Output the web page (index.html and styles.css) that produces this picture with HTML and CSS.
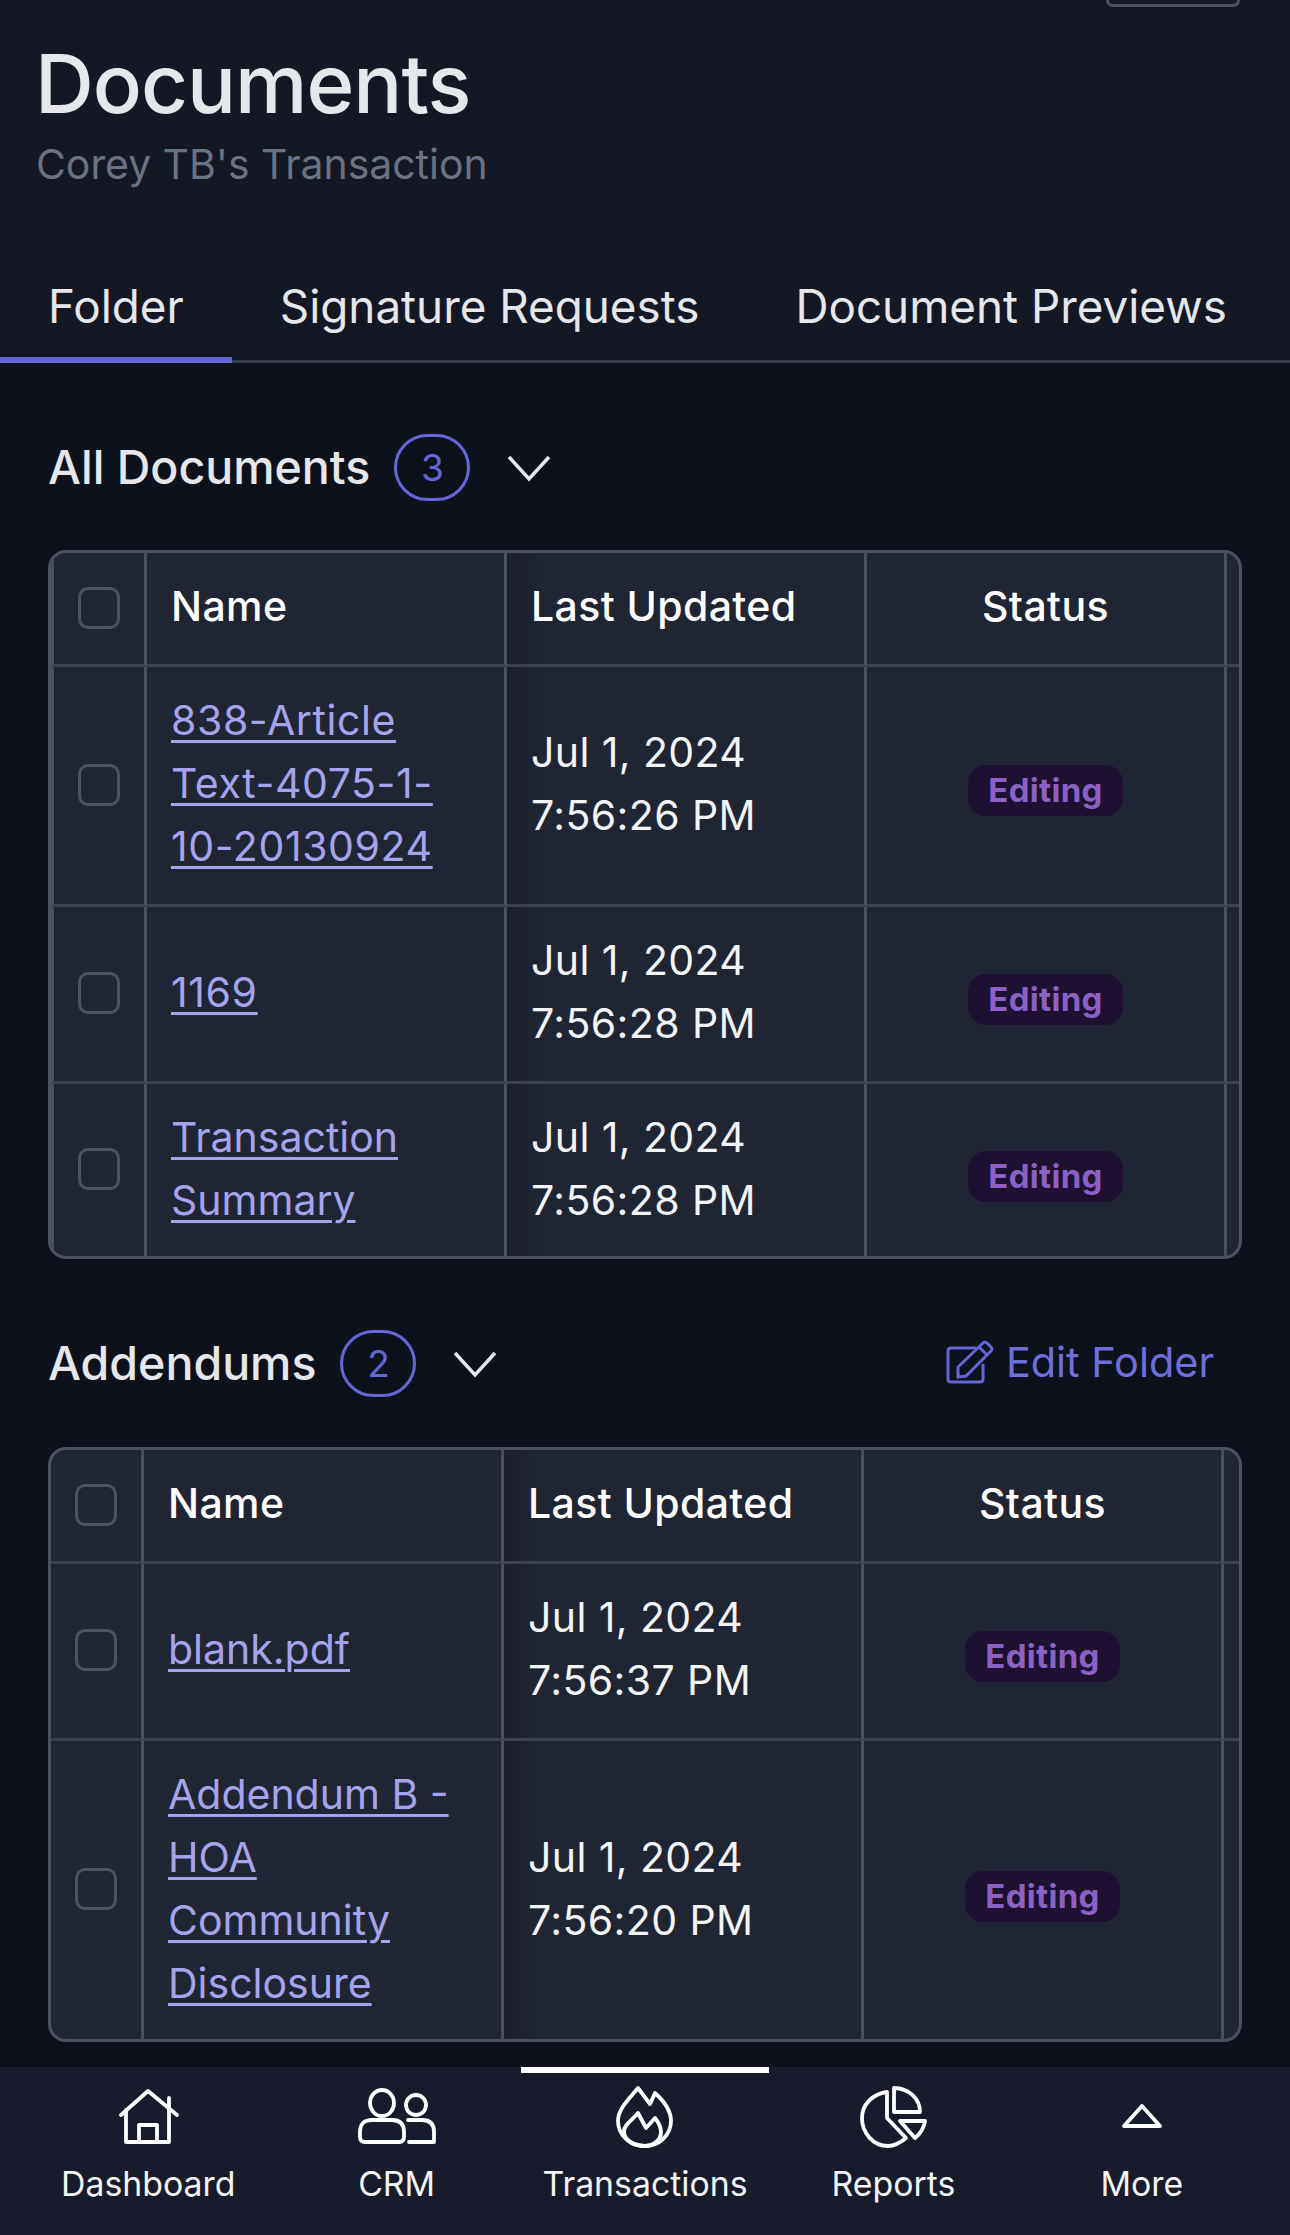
FILE: index.html
```html
<!DOCTYPE html>
<html lang="en">

<head>
    <meta charset="UTF-8">
    <meta name="viewport" content="width=device-width, initial-scale=1.0">
    <title>Documents</title>

    <link rel="stylesheet" href="styles.css">
</head>

<body>

    <header class="page-header">
        <div class="top-button"></div>
        <h1>Documents</h1>
        <p class="subtitle">Corey TB's Transaction</p>

        <nav class="tabs">
            <a class="tab tab-active">Folder</a>
            <a class="tab">Signature Requests</a>
            <a class="tab">Document Previews</a>
        </nav>
    </header>

    <main class="content">
        <section class="folder">
            <div class="folder-head">
                <h2>All Documents</h2>
                <span class="count">3</span>
                <svg class="chevron" viewBox="0 0 44 28"><path d="M2 3 L22 25 L42 3"/></svg>
            </div>

            <div class="table-wrap">
                <table class="doc-table">
                    <thead>
                        <tr>
                            <th class="col-check"><span class="checkbox"></span></th>
                            <th class="col-name">Name</th>
                            <th class="col-date">Last Updated</th>
                            <th class="col-status">Status</th>
                            <th class="col-more"></th>
                        </tr>
                    </thead>
                    <tbody>
                        <tr>
                            <td class="col-check"><span class="checkbox"></span></td>
                            <td class="col-name"><a class="link-digits" href="#">838-Article Text-4075-1-10-20130924</a></td>
                            <td class="col-date">Jul 1, 2024<br>7:56:26 PM</td>
                            <td class="col-status"><span class="badge">Editing</span></td>
                            <td class="col-more"></td>
                        </tr>
                        <tr>
                            <td class="col-check"><span class="checkbox"></span></td>
                            <td class="col-name"><a class="link-digits" href="#">1169</a></td>
                            <td class="col-date">Jul 1, 2024<br>7:56:28 PM</td>
                            <td class="col-status"><span class="badge">Editing</span></td>
                            <td class="col-more"></td>
                        </tr>
                        <tr>
                            <td class="col-check"><span class="checkbox"></span></td>
                            <td class="col-name"><a href="#">Transaction Summary</a></td>
                            <td class="col-date">Jul 1, 2024<br>7:56:28 PM</td>
                            <td class="col-status"><span class="badge">Editing</span></td>
                            <td class="col-more"></td>
                        </tr>
                    </tbody>
                </table>
            </div>
        </section>

        <section class="folder">
            <div class="folder-head">
                <h2>Addendums</h2>
                <span class="count">2</span>
                <svg class="chevron" viewBox="0 0 44 28"><path d="M2 3 L22 25 L42 3"/></svg>
                <a class="edit-folder">
                    <svg viewBox="0 0 48 44">
                        <path d="M30 8 H5 Q2 8 2 11 V39 Q2 42 5 42 H34 Q37 42 37 39 V24"/>
                        <path d="M12 27 L37 3 Q39 1 41 3 L45 7 Q47 9 45 11 L20 36 L12 37 Z"/>
                        <path d="M33 7 L41 15"/>
                    </svg>
                    Edit Folder
                </a>
            </div>

            <div class="table-wrap">
                <table class="doc-table doc-table-scrolled">
                    <thead>
                        <tr>
                            <th class="col-check"><span class="checkbox"></span></th>
                            <th class="col-name">Name</th>
                            <th class="col-date">Last Updated</th>
                            <th class="col-status">Status</th>
                            <th class="col-more"></th>
                        </tr>
                    </thead>
                    <tbody>
                        <tr>
                            <td class="col-check"><span class="checkbox"></span></td>
                            <td class="col-name"><a href="#">blank.pdf</a></td>
                            <td class="col-date">Jul 1, 2024<br>7:56:37 PM</td>
                            <td class="col-status"><span class="badge">Editing</span></td>
                            <td class="col-more"></td>
                        </tr>
                        <tr>
                            <td class="col-check"><span class="checkbox"></span></td>
                            <td class="col-name"><a href="#">Addendum B - HOA Community Disclosure</a></td>
                            <td class="col-date">Jul 1, 2024<br>7:56:20 PM</td>
                            <td class="col-status"><span class="badge">Editing</span></td>
                            <td class="col-more"></td>
                        </tr>
                    </tbody>
                </table>
            </div>
        </section>
    </main>

    <nav class="bottom-nav">
        <a class="nav-item">
            <svg viewBox="0 0 80 64">
                <path d="M13 30 L40 6 L69 30"/>
                <path d="M18 25 V57 H61 V13"/>
                <path d="M31 57 V40 H49 V57"/>
            </svg>
            Dashboard
        </a>
        <a class="nav-item">
            <svg viewBox="0 0 80 64">
                <ellipse cx="25" cy="18" rx="12" ry="13"/>
                <circle cx="59" cy="20" r="10"/>
                <path d="M8 57 H42 Q47 57 47 52 V47 Q47 35 35 35 H15 Q3 35 3 47 V52 Q3 57 8 57 Z"/>
                <path d="M51 35 H65 Q77 35 77 47 V57 H52"/>
            </svg>
            CRM
        </a>
        <a class="nav-item nav-active">
            <svg viewBox="0 0 80 64">
                <path d="M33 3 L45 19 L50 8 C60 17 66 26 66 36 C66 50 54 61 40 61 C25 61 13 50 13 36 C13 24 24 14 33 3 Z"/>
                <path d="M33 28 L41 43 L50 33 C54 38 56 43 56 47 C56 55 48 61 40 61 C28 61 19 55 19 46 C19 40 26 36 33 28 Z"/>
            </svg>
            Transactions
        </a>
        <a class="nav-item">
            <svg viewBox="0 0 80 64">
                <path d="M34 7 V33 L53 53 C47 58 42 61 35 61 C20 61 9 48 9 33 C9 20 19 9 34 7 Z"/>
                <path d="M41 3 C56 3 67 14 67 27 H41 Z"/>
                <path d="M47 36 H72 C71 43 67 49 62 53 Z"/>
            </svg>
            Reports
        </a>
        <a class="nav-item">
            <svg viewBox="0 0 80 64">
                <path d="M40 21 L22 41 H58 Z"/>
            </svg>
            More
        </a>
    </nav>

</body>

</html>
```

FILE: styles.css
```css
* {
    box-sizing: border-box;
}

html,
body {
    height: 100%;
}

body {
    margin: 0;
    height: 100vh;
    display: flex;
    flex-direction: column;
    overflow: hidden;
    font-family: Inter, "Liberation Sans", sans-serif;
    background-color: #0d111c;
    color: #e5e7eb;
}

/* Page header */
.page-header {
    display: flex;
    flex-direction: column;
    height: 363px;
    background-color: #141824;
    border-bottom: 3px solid #3a3e4a;
}

.top-button {
    align-self: flex-end;
    width: 134px;
    height: 7px;
    margin-right: 50px;
    border: 3px solid #4b5160;
    border-top: none;
    border-radius: 0 0 12px 12px;
}

h1 {
    margin: 29px 0 0 35px;
    font-size: 81.5px;
    line-height: 96px;
    font-weight: 500;
    letter-spacing: -1px;
}

.subtitle {
    margin: 2px 0 0 36px;
    font-size: 40.9px;
    line-height: 60px;
    color: #6b7280;
}

.tabs {
    display: flex;
    margin-top: auto;
    margin-bottom: -3px;
}

.tab {
    padding: 0 48px;
    height: 84px;
    font-size: 45.8px;
    line-height: 56px;
}

.tab-active {
    border-bottom: 6px solid #6466d8;
}

/* Folder sections */
.content {
    flex: 1;
    padding: 0 48px;
    overflow: hidden;
}

.folder-head {
    display: flex;
    align-items: center;
    height: 66px;
    margin-top: 72px;
    margin-bottom: 49px;
}

.folder + .folder .folder-head {
    margin-top: 72px;
    margin-bottom: 50px;
}

h2 {
    margin: 0 0 2px;
    font-size: 46.5px;
    font-weight: 450;
}

.count {
    display: flex;
    align-items: center;
    justify-content: center;
    width: 76px;
    height: 67px;
    margin: 0 0 1px 24px;
    border: 3px solid #6466d8;
    border-radius: 34px;
    font-size: 37px;
    color: #6466d8;
}

.chevron {
    width: 44px;
    height: 28px;
    margin-left: 37px;
    fill: none;
    stroke: #e5e7eb;
    stroke-width: 3.5;
}

.edit-folder {
    display: flex;
    align-items: center;
    gap: 12px;
    margin: 0 28px 4px auto;
    font-size: 41.4px;
    color: #6f6fdc;
}

.edit-folder svg {
    width: 48px;
    height: 44px;
    fill: none;
    stroke: #6466d8;
    stroke-width: 3;
}

/* Tables */
.table-wrap {
    border: 3px solid #4b5160;
    border-radius: 18px;
    background-color: #202533;
    overflow: hidden;
}

.doc-table {
    border-collapse: separate;
    border-spacing: 0;
    table-layout: fixed;
    width: 1290px;
    font-size: 41px;
    line-height: 63px;
    letter-spacing: 0.4px;
}

.doc-table-scrolled {
    margin-left: -3px;
}

.doc-table th,
.doc-table td {
    padding: 22px 24px 26px;
    border-right: 3px solid #4b5160;
    border-bottom: 3px solid #3c4150;
    text-align: left;
    vertical-align: middle;
}

.doc-table tbody tr:last-child td {
    padding-bottom: 24px;
    border-bottom: none;
}

.doc-table th {
    font-weight: 450;
    color: #fff;
}

.doc-table td {
    color: #f3f4f6;
}

.doc-table th.col-check,
.doc-table td.col-check,
.doc-table tbody tr:last-child td.col-check {
    width: 96px;
    padding: 0 0 2px;
    text-align: center;
    border-left: 3px solid #4b5160;
    line-height: 0;
}

.doc-table .col-name {
    width: 360px;
}

.doc-table .col-date {
    width: 360px;
    background-image: linear-gradient(90deg, rgba(0, 0, 0, 0.16), transparent 36px);
}

.doc-table .col-status {
    width: 360px;
    text-align: center;
}

.checkbox {
    display: inline-block;
    width: 42px;
    height: 42px;
    border: 3px solid #4b5160;
    border-radius: 10px;
}

.col-name a {
    color: #a5a3ec;
    letter-spacing: 0;
    text-decoration: underline;
    text-decoration-thickness: 3px;
    text-underline-offset: 5px;
}

.col-name a.link-digits {
    letter-spacing: 0.6px;
}

.badge {
    display: inline-block;
    position: relative;
    top: 4px;
    padding: 0 20px;
    border-radius: 18px;
    background-color: #1d1030;
    color: #8b62c4;
    font-size: 33px;
    line-height: 51px;
    font-weight: 700;
    letter-spacing: 0.3px;
}

/* Bottom navigation */
.bottom-nav {
    display: flex;
    height: 168px;
    padding: 0 24px;
    background-color: #171b2b;
}

.nav-item {
    flex: 1;
    display: flex;
    flex-direction: column;
    align-items: center;
    padding-top: 12px;
    border-top: 6px solid transparent;
    font-size: 33.8px;
    line-height: 48px;
    color: #f3f4f6;
}

.nav-active {
    border-top-color: #fff;
}

.nav-item svg {
    width: 80px;
    height: 64px;
    margin-bottom: 11px;
    fill: none;
    stroke: #fff;
    stroke-width: 3.8;
    stroke-linejoin: round;
    stroke-linecap: round;
}
```
